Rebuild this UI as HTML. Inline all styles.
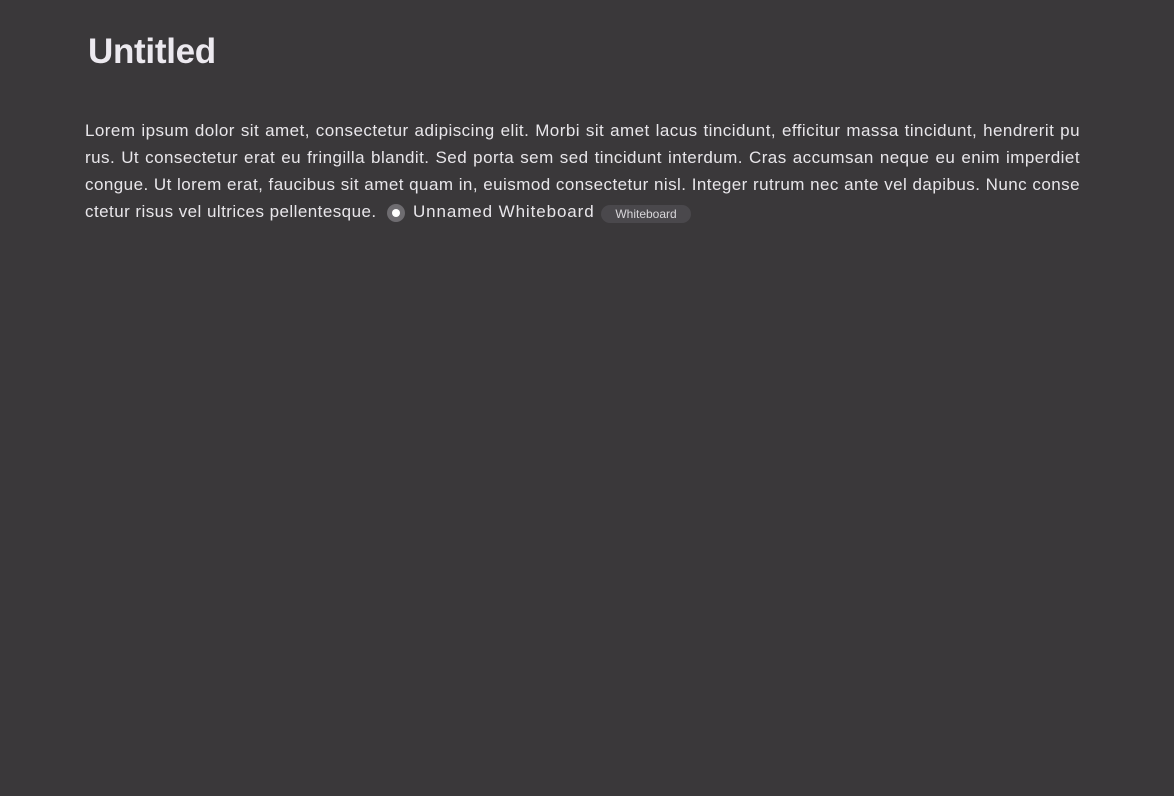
<!DOCTYPE html>
<html><head><style>
html,body{margin:0;padding:0;}
body{width:1174px;height:796px;background:#3a383a;font-family:"Liberation Sans",sans-serif;color:#e8e6ea;overflow:hidden;position:relative;}
h1{position:absolute;left:88px;top:30px;margin:0;font-size:35px;font-weight:bold;letter-spacing:-0.3px;color:#ece9ef;line-height:44px;}
.p{position:absolute;left:85px;top:117px;width:995px;font-size:17px;letter-spacing:0.45px;line-height:27px;}
.l{display:block;white-space:nowrap;text-align:justify;text-align-last:justify;height:27px;}
.ib{display:inline-block;text-align:justify;text-align-last:justify;white-space:nowrap;vertical-align:top;}
.dot{position:absolute;left:387px;top:204px;width:18px;height:18px;border-radius:50%;background:#6e6c70;}
.dot:after{content:"";position:absolute;left:5px;top:5px;width:8px;height:8px;border-radius:50%;background:#fff;}
.name{position:absolute;left:413px;top:198px;font-size:17px;letter-spacing:0.9px;line-height:27px;}
.tag{position:absolute;left:601px;top:205px;width:90px;height:18px;border-radius:9px;background:#4a484c;color:#d8d6da;font-size:12px;line-height:18px;text-align:center;}
</style></head><body>
<h1>Untitled</h1>
<div class="p">
<span class="l">Lorem ipsum dolor sit amet, consectetur adipiscing elit. Morbi sit amet lacus tincidunt, efficitur massa tincidunt, hendrerit pu</span>
<span class="l">rus. Ut consectetur erat eu fringilla blandit. Sed porta sem sed tincidunt interdum. Cras accumsan neque eu enim imperdiet</span>
<span class="l">congue. Ut lorem erat, faucibus sit amet quam in, euismod consectetur nisl. Integer rutrum nec ante vel dapibus. Nunc conse</span>
<span class="ib" style="width:290px">ctetur risus vel ultrices pellentesque.</span>
</div>
<div class="dot"></div>
<div class="name">Unnamed Whiteboard</div>
<div class="tag">Whiteboard</div>
</body></html>
